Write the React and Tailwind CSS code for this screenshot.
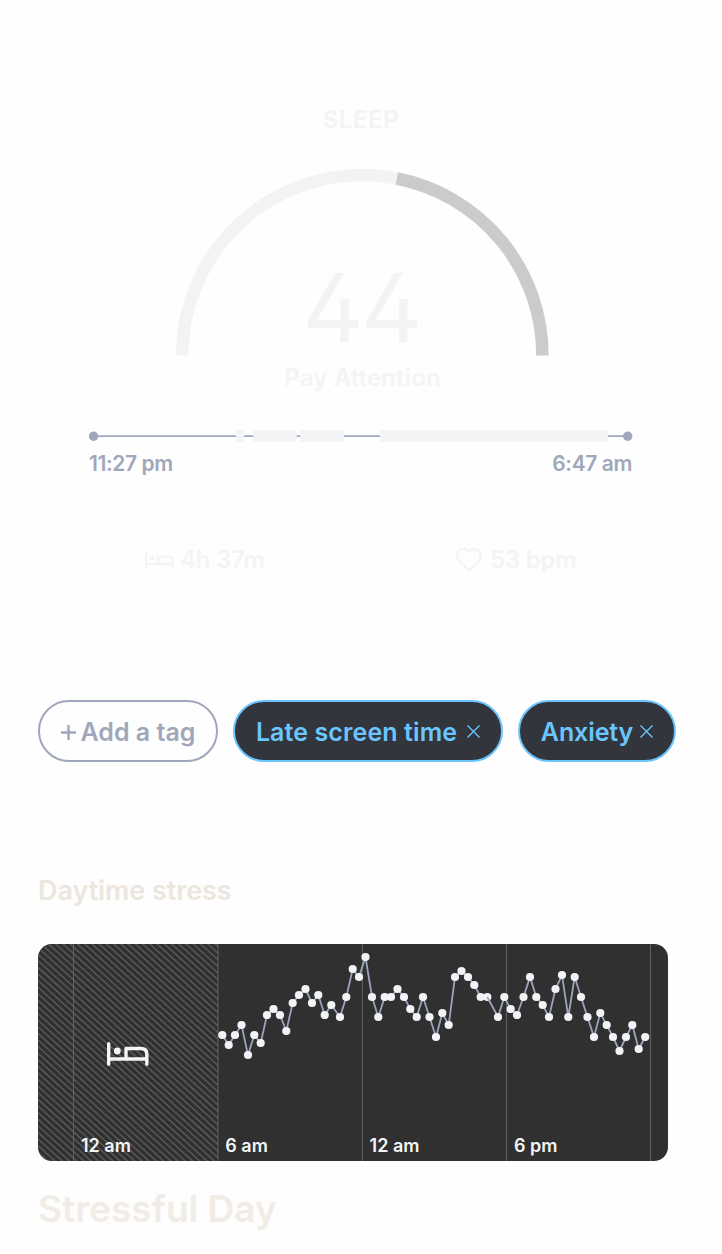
import React from "react";

const POINTS = [
  [222.3, 1035], [228.7, 1045], [235, 1035], [241.5, 1025], [248, 1055], [254.3, 1035], [260.7, 1043],
  [267, 1015], [273.5, 1009], [280, 1015], [286.3, 1031], [292.7, 1003], [299, 995], [305.5, 989],
  [312, 1003], [318.3, 995], [324.7, 1015], [331.3, 1005], [340, 1017], [346.3, 997], [352.7, 969],
  [359, 977], [365.5, 957], [372, 997], [378.3, 1017], [384.7, 997], [391, 997], [397.5, 989],
  [404, 997], [410.3, 1009], [416.7, 1017], [423, 997], [429.5, 1017], [436, 1037], [442.3, 1013],
  [448.7, 1025], [455, 977], [461.5, 971], [468, 977], [474.3, 985], [480.7, 997], [487.3, 997],
  [498, 1017], [504.3, 997], [510.7, 1009], [517, 1015], [523.5, 997], [530, 977], [536.3, 997],
  [542.7, 1005], [549, 1017], [555.5, 989], [562, 975], [568.3, 1017], [574.7, 977], [581, 997],
  [587.5, 1017], [594, 1037], [600.3, 1013], [606.7, 1025], [613, 1037], [619.5, 1051],
  [626, 1037], [632.3, 1025], [638.7, 1049], [645.2, 1037],
];

const SEGMENTS = [
  [236, 8],
  [253.3, 43.500],
  [300, 44],
  [380, 228],
];

const HATCH = Array.from({ length: 60 }, (_, i) => {
  const y = 944 - 168 + i * 6.6;
  return `M38 ${y.toFixed(1)}l180 164`;
}).join("");

function Bed({ className, strokeWidth = 2 }) {
  return (
    <svg className={className} viewBox="0 0 42 24" preserveAspectRatio="none" fill="none" stroke="currentColor" strokeWidth={strokeWidth} strokeLinecap="round" strokeLinejoin="round">
      <path d="M1.7 1.7V22.3M1.7 17H39.800M39.800 22.3V12Q39.800 6.500 34 6.500H19V17" />
      <circle cx="10.300" cy="9" r="3.400" fill="currentColor" stroke="none" />
    </svg>
  );
}

function Cross() {
  return (
    <svg className="size-[13px]" viewBox="0 0 13 13" stroke="currentColor" strokeWidth="1.400">
      <path d="M.5.5l12 12M12.500.5l-12 12" />
    </svg>
  );
}

function Gauge() {
  return (
    <div className="mx-auto mt-[30px] grid h-[190px] w-[374px]">
      <svg className="col-start-1 row-start-1 h-[190px] w-[374px] overflow-visible" viewBox="174 166 374 190" fill="none" strokeWidth="12.500">
        <path d="M182.200 355.400A180.100 180.100 0 0 1 396.800 178.500" stroke="#f1f3f5" />
        <path d="M396.800 178.500A180.100 180.100 0 0 1 542.400 355.400" stroke="#cbcbcb" />
      </svg>
      <div className="col-start-1 row-start-1 self-end pb-[12px] text-center text-[95px] leading-[72px] font-normal tracking-[-2.5px] text-[#f1f3f5] [font-feature-settings:'cv02']">44</div>
    </div>
  );
}

function Timeline() {
  return (
    <div className="ml-[89px] w-[544px] text-[#a0a7ba]">
      <svg className="block h-[14px] w-[544px]" viewBox="89 429 544 14">
        <path d="M93 436.200H628" stroke="currentColor" strokeWidth="1.700" />
        <circle cx="93.600" cy="436.200" r="4.700" fill="currentColor" />
        <circle cx="627.700" cy="436.200" r="4.700" fill="currentColor" />
        {SEGMENTS.map(([x, w]) => (
          <rect key={x} x={x} y="430" width={w} height="12" rx="3" fill="#f1f3f5" />
        ))}
      </svg>
      <div className="mt-[7px] flex h-7 items-center justify-between text-[21px] leading-7 font-semibold tracking-[-0.4px]">
        <span>11:27 pm</span>
        <span className="mr-[1px]">6:47 am</span>
      </div>
    </div>
  );
}

function StressChart() {
  return (
    <div className="relative ml-[38px] mt-[37px] h-[217px] w-[630.300px] overflow-hidden rounded-[14px] bg-[#303030] text-[#f3f4f6]">
      <svg className="block h-[217px] w-[631px]" viewBox="38 944 631 217">
        <clipPath id="asleep">
          <rect x="38" y="944" width="180" height="217" />
        </clipPath>
        <path d={HATCH} clipPath="url(#asleep)" stroke="#585a59" strokeWidth="1.500" />
        <path d="M73.500 944V1161M218 944V1161M362.300 944V1161M506.500 944V1161M650.500 944V1161" stroke="#626262" strokeWidth="1" />
        <polyline points={POINTS.map((p) => p.join(",")).join(" ")} fill="none" stroke="#9ba4bb" strokeWidth="1.800" />
        {POINTS.map(([x, y]) => (
          <circle key={x} cx={x} cy={y} r="4.100" fill="#f1f3f6" />
        ))}
        <path d="M487.300 997L490 1002" stroke="#9ba4bb" strokeWidth="1.600" />
      </svg>
      <Bed className="absolute left-[69px] top-[98px] h-[24px] w-[42px]" strokeWidth={3.4} />
      <div className="absolute bottom-[3px] left-[43px] flex text-[18px] leading-6 font-semibold">
        <span className="w-[144.300px]">12 am</span>
        <span className="w-[144.300px]">6 am</span>
        <span className="w-[144.300px]">12 am</span>
        <span>6 pm</span>
      </div>
    </div>
  );
}

export default function App() {
  return (
    <main className="h-[1254px] w-[722px] overflow-hidden bg-[#fefefe] font-['Inter',sans-serif]">
      <h2 className="pt-[104px] text-center text-[24px] leading-8 font-semibold tracking-[0.6px] text-[#f3f4f5]">SLEEP</h2>
      <Gauge />
      <p className="mt-[6px] mb-[35px] pl-[3px] text-center text-[24px] leading-8 font-semibold tracking-[0.15px] text-[#f3f4f5]">Pay Attention</p>
      <Timeline />
      <div className="mt-[66px] flex h-8 items-center text-[24px] leading-8 font-semibold tracking-[-0.25px] text-[#f3f4f5]">
        <div className="ml-[145px] flex w-[311px] items-center gap-[6px]">
          <Bed className="h-[17px] w-[29px]" strokeWidth={3.3} />
          <span>4h 37m</span>
        </div>
        <div className="flex items-center gap-[8px]">
          <svg className="h-[24px] w-[26px]" viewBox="0 0 26 24" fill="none" stroke="currentColor" strokeWidth="2.300" strokeLinejoin="round">
            <path d="M13 22.500L3 12.500C-1 7 2 1.200 7 1.200Q10.500 1.200 13 4Q15.500 1.200 19 1.200C24 1.200 27 7 23 12.500Z" />
          </svg>
          <span>53 bpm</span>
        </div>
      </div>
      <div className="ml-[38px] mt-[124px] flex gap-[15px] text-[25px] leading-8 font-semibold">
        <button className="flex h-[62px] w-[180px] items-center justify-center gap-[5px] rounded-full border-2 border-[#a0a7ba] text-[#a0a7ba]">
          <svg className="mt-[2px] size-[15px]" viewBox="0 0 15 15" stroke="currentColor" strokeWidth="2.400"><path d="M0 7.500H15M7.500 0V15" /></svg>
          <span className="pt-[2px]">Add a tag</span>
        </button>
        <button className="flex h-[62px] w-[270px] items-center justify-center gap-[10px] rounded-full border-2 border-[#6bc5ff] bg-[#33353d] text-[#6bc5ff]">
          <span className="pt-[2px] tracking-[0.100px]">Late screen time</span><Cross />
        </button>
        <button className="flex h-[62px] w-[158px] items-center justify-center gap-[7px] rounded-full border-2 border-[#6bc5ff] bg-[#33353d] text-[#6bc5ff]">
          <span className="pt-[2px] tracking-[-0.100px]">Anxiety</span><Cross />
        </button>
      </div>
      <h2 className="ml-[38px] mt-[113px] text-[27px] leading-8 font-semibold tracking-[-0.080px] text-[#ece6df]">Daytime stress</h2>
      <StressChart />
      <h1 className="ml-[38px] mt-[24px] text-[37px] leading-[48px] font-semibold text-[#f1ece6]">Stressful Day</h1>
    </main>
  );
}
